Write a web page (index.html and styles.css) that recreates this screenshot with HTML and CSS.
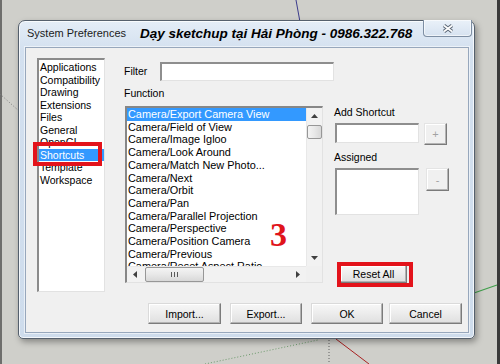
FILE: index.html
```html
<!DOCTYPE html>
<html>
<head>
<meta charset="utf-8">
<link rel="stylesheet" href="styles.css">
</head>
<body>
<svg class="scene" width="500" height="364" viewBox="0 0 500 364">
  <rect x="0" y="0" width="2" height="364" fill="#6e6e6c"/>
  <rect x="497" y="0" width="3" height="364" fill="#3a3a3a"/>
  <line x1="296" y1="0" x2="300" y2="22" stroke="#3b3b8c" stroke-width="1"/>
  <line x1="0" y1="94" x2="19" y2="111" stroke="#7c7c7c" stroke-width="1" stroke-dasharray="1 2"/>
  <line x1="474" y1="293" x2="497" y2="285" stroke="#3f9f4a" stroke-width="1.2"/>
  <line x1="336" y1="339" x2="369" y2="364" stroke="#a82222" stroke-width="1"/>
  <line x1="329" y1="340" x2="329" y2="364" stroke="#5e5e5e" stroke-width="1" stroke-dasharray="1 2"/>
  <line x1="205" y1="364" x2="318" y2="340" stroke="#6c9a6c" stroke-width="1" stroke-dasharray="1 2"/>
</svg>

<div class="window">
  <div class="titlebar">
    <div class="title">System Preferences</div>
    <div class="close">
      <svg width="12" height="9" viewBox="0 0 12 9">
        <path d="M2 1.5 L10 7.5 M10 1.5 L2 7.5" stroke="#5b6776" stroke-width="3.6" fill="none"/>
        <path d="M2 1.5 L10 7.5 M10 1.5 L2 7.5" stroke="#ffffff" stroke-width="1.6" fill="none"/>
      </svg>
    </div>
  </div>
  <div class="banner">Dạy sketchup tại Hải Phòng - 0986.322.768</div>

  <div class="client">
    <div class="main">
      <ul class="cats">
        <li>Applications</li>
        <li>Compatibility</li>
        <li>Drawing</li>
        <li>Extensions</li>
        <li>Files</li>
        <li>General</li>
        <li>OpenGL</li>
        <li class="sel">Shortcuts</li>
        <li>Template</li>
        <li>Workspace</li>
      </ul>

      <div class="center">
        <div class="filter-row">
          <span class="filter-label">Filter</span>
          <div class="field filter-input"></div>
        </div>
        <div class="lower">
          <div class="fcol">
            <div class="label">Function</div>
            <div class="flist">
              <div class="rows">
                <div class="sel">Camera/Export Camera View</div>
                <div>Camera/Field of View</div>
                <div>Camera/Image Igloo</div>
                <div>Camera/Look Around</div>
                <div>Camera/Match New Photo...</div>
                <div>Camera/Next</div>
                <div>Camera/Orbit</div>
                <div>Camera/Pan</div>
                <div>Camera/Parallel Projection</div>
                <div>Camera/Perspective</div>
                <div>Camera/Position Camera</div>
                <div>Camera/Previous</div>
                <div>Camera/Reset Aspect Ratio</div>
              </div>
              <div class="vscroll">
                <div class="sbtn"><svg width="7" height="4" viewBox="0 0 7 4"><polygon points="3.5,0 7,4 0,4" fill="#404040"/></svg></div>
                <div class="vthumb"></div>
                <div class="spacer"></div>
                <div class="sbtn"><svg width="7" height="4" viewBox="0 0 7 4"><polygon points="0,0 7,0 3.5,4" fill="#404040"/></svg></div>
              </div>
              <div class="hscroll">
                <div class="sbtn"><svg width="4" height="7" viewBox="0 0 4 7"><polygon points="4,0 4,7 0,3.5" fill="#404040"/></svg></div>
                <div class="hthumb">
                  <svg width="7" height="5" viewBox="0 0 7 5"><rect x="0" y="0" width="1" height="5" fill="#5a5a5a"/><rect x="3" y="0" width="1" height="5" fill="#5a5a5a"/><rect x="6" y="0" width="1" height="5" fill="#5a5a5a"/></svg>
                </div>
                <div class="spacer"></div>
                <div class="sbtn"><svg width="4" height="7" viewBox="0 0 4 7"><polygon points="0,0 4,3.5 0,7" fill="#404040"/></svg></div>
              </div>
              <div class="corner"></div>
              <div class="mark">3</div>
            </div>
          </div>

          <div class="rcol">
            <div class="label">Add Shortcut</div>
            <div class="pair pair-add">
              <div class="field add-input"></div>
              <div class="mini plus">+</div>
            </div>
            <div class="label assigned-label">Assigned</div>
            <div class="pair pair-assigned">
              <div class="field assigned-box"></div>
              <div class="mini minus">-</div>
            </div>
            <div class="btn reset">Reset All</div>
          </div>
        </div>
      </div>
    </div>

    <div class="buttons">
      <div class="btn b-import">Import...</div>
      <div class="btn b-export">Export...</div>
      <div class="btn b-ok">OK</div>
      <div class="btn b-cancel">Cancel</div>
    </div>
  </div>
</div>
</body>
</html>
```

FILE: styles.css
```css
* { box-sizing: border-box; }
html, body { margin: 0; }
body {
  width: 500px;
  height: 364px;
  overflow: hidden;
  position: relative;
  background: #cfcfca;
  padding: 20px 0 0 18px;
  font-family: "Liberation Sans", Arial, sans-serif;
  font-size: 10.5px;
  color: #000;
}
.scene { position: absolute; left: 0; top: 0; }

.window {
  position: relative;
  width: 457px;
  height: 319px;
  border: 1px solid #55606d;
  border-radius: 7px 7px 5px 5px;
  background: linear-gradient(#e4edf7, #d3e0ef 30px, #cedcec);
  padding: 0 5px 5px 6px;
  display: flex;
  flex-direction: column;
  box-shadow: 2px 3px 6px rgba(0,0,0,.35), inset 0 0 0 1px rgba(255,255,255,.75);
}
.titlebar {
  height: 26px;
  flex: none;
  display: flex;
  align-items: flex-start;
}
.title {
  margin: 5px 0 0 2px;
  font-size: 11px;
  line-height: 15px;
  color: #1b1b1b;
}
.close {
  margin: -1px -3px 0 auto;
  width: 49px;
  height: 17px;
  border: 1px solid #7d8ea3;
  border-top: none;
  border-radius: 0 0 4px 4px;
  background: linear-gradient(#eaf1f9, #d6e2f0);
  box-shadow: inset 0 0 0 1px rgba(255,255,255,.6);
  display: flex;
  align-items: center;
  justify-content: center;
}
.close svg { display: block; }
.banner {
  position: absolute;
  left: 121px;
  top: 5px;
  font-weight: bold;
  font-style: italic;
  font-size: 13.5px;
  line-height: 16px;
  white-space: nowrap;
  color: #000;
}

.client {
  flex: 1;
  background: #f0f0f0;
  border: 1px solid #97a7bc;
  box-shadow: 0 0 0 1px rgba(255,255,255,.55);
  display: flex;
  flex-direction: column;
}
.main {
  display: flex;
  padding: 10px 0 0 11px;
}

.cats {
  list-style: none;
  margin: 0;
  width: 68px;
  height: 234px;
  background: #fff;
  border-style: solid;
  border-width: 2px 1px 1px 2px;
  border-color: #8b8b8b #e2e2e2 #e2e2e2 #8b8b8b;
  padding: 1px 0 0 0;
}
.cats li {
  line-height: 12.55px;
  padding-left: 1px;
  white-space: nowrap;
}
.cats li.sel {
  position: relative;
  background: #3399ff;
  color: #fff;
}
.cats li.sel::after {
  content: "";
  position: absolute;
  left: -6px;
  top: -7px;
  right: 2px;
  bottom: -4.5px;
  border: 4px solid #e3131b;
}

.center {
  margin-left: 19px;
  display: flex;
  flex-direction: column;
}
.filter-row {
  margin-top: 4px;
  display: flex;
  align-items: center;
}
.filter-label {
  width: 36px;
  line-height: 13px;
}
.field {
  background: #fff;
  border-style: solid;
  border-width: 2px 1px 1px 2px;
  border-color: #8e8e8e #e2e2e2 #e2e2e2 #8e8e8e;
}
.filter-input { width: 174px; height: 19px; }

.lower {
  display: flex;
  margin-top: 6px;
}
.label { line-height: 13px; white-space: nowrap; }
.fcol { width: 199px; }
.flist {
  position: relative;
  margin: 6px 0 0 1px;
  width: 198px;
  height: 177px;
  background: #fff;
  border-style: solid;
  border-width: 2px 1px 1px 2px;
  border-color: #878787 #e2e2e2 #e2e2e2 #878787;
  display: grid;
  grid-template-columns: 1fr 16px;
  grid-template-rows: 1fr 16px;
}
.rows { overflow: hidden; font-size: 10.9px; }
.rows div {
  line-height: 12.7px;
  padding-left: 1px;
  white-space: nowrap;
}
.rows div.sel { background: #3399ff; color: #fff; }

.vscroll {
  background: #f2f2f2;
  border-left: 1px solid #e8e8e8;
  display: flex;
  flex-direction: column;
}
.hscroll {
  background: #f2f2f2;
  border-top: 1px solid #e8e8e8;
  display: flex;
}
.corner { background: #f0f0f0; }
.sbtn {
  flex: none;
  width: 16px;
  height: 16px;
  display: flex;
  align-items: center;
  justify-content: center;
}
.vscroll .sbtn { width: auto; }
.hscroll .sbtn { height: auto; }
.sbtn svg { display: block; }
.spacer { flex: 1; }
.vthumb {
  height: 14px;
  margin-top: 1px;
  border: 1px solid #979797;
  border-radius: 2px;
  background: linear-gradient(90deg, #f4f4f4, #e8e8e8 50%, #d8d8d8);
}
.hthumb {
  width: 59px;
  margin: 0 0 0 2px;
  border: 1px solid #979797;
  border-radius: 2px;
  background: linear-gradient(#f4f4f4, #e8e8e8 50%, #d8d8d8);
  display: flex;
  align-items: center;
  justify-content: center;
}
.hthumb svg { display: block; }
.mark {
  position: absolute;
  left: 143px;
  top: 110px;
  font-family: "Liberation Serif", "Times New Roman", serif;
  font-weight: bold;
  font-size: 34px;
  line-height: 34px;
  color: #e0141b;
}

.rcol {
  margin-left: 11px;
  display: flex;
  flex-direction: column;
  align-items: flex-start;
}
.rcol > .label:first-child { margin-top: 19px; }
.pair { display: flex; align-items: flex-start; margin-left: 1px; }
.pair-add { margin-top: 4px; }
.add-input { width: 84px; height: 20px; }
.assigned-label { margin-top: 6px; }
.pair-assigned { margin-top: 4px; }
.assigned-box { width: 84px; height: 47px; }
.mini {
  width: 23px;
  background: #f0f0f0;
  border: 1px solid;
  border-color: #e4e4e4 #7a7a7a #7a7a7a #e4e4e4;
  box-shadow: inset -1px -1px #b4b4b4, inset 1px 1px #fff;
  color: #a2a2a2;
  display: flex;
  align-items: center;
  justify-content: center;
  font-size: 11px;
}
.plus { height: 22px; margin-left: 5px; }
.minus { height: 23px; margin-left: 7px; }

.btn {
  height: 21px;
  border: 1px solid;
  border-color: #dadada #7b7b7b #7b7b7b #dadada;
  background: linear-gradient(#f7f7f7, #ececec 50%, #dfdfdf);
  box-shadow: inset -1px -1px #b2b2b2, inset 1px 1px #fff;
  display: flex;
  align-items: center;
  justify-content: center;
  white-space: nowrap;
}
.reset {
  position: relative;
  margin: 50px 0 0 6px;
  width: 67px;
  height: 18px;
}
.reset::after {
  content: "";
  position: absolute;
  left: -4px;
  top: -4px;
  right: -7px;
  bottom: -5px;
  border: 4px solid #e3131b;
}

.buttons {
  display: flex;
  margin-top: 11px;
  padding-left: 122px;
}
.b-import { width: 73px; }
.b-export { width: 72px; margin-left: 9px; }
.b-ok { width: 72px; margin-left: 9px; }
.b-cancel { width: 73px; margin-left: 6px; }
```
